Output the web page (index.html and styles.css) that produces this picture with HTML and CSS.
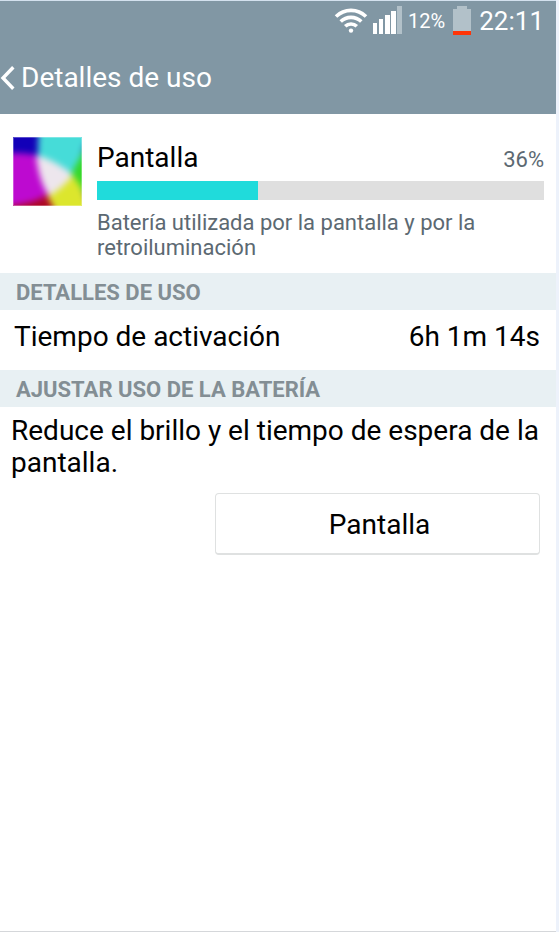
FILE: index.html
```html
<!DOCTYPE html>
<html lang="es">
<head>
<meta charset="utf-8">
<meta name="viewport" content="width=device-width, initial-scale=1">
<title>Detalles de uso</title>
<link rel="stylesheet" href="styles.css">
</head>
<body>
<div class="screen">
  <header class="top">
    <div class="status">
      <svg class="wifi" width="34" height="28" viewBox="0 0 34 28" fill="none" stroke="#fff" stroke-width="3.6" aria-hidden="true">
        <path d="M2 10.500a21.500 21.500 0 0 1 30 0"/>
        <path d="M6.700 15.500a14.800 14.800 0 0 1 20.600 0"/>
        <path d="M11.200 20.300a8.400 8.400 0 0 1 11.600 0"/>
        <circle cx="17" cy="24.600" r="2.200" fill="#fff" stroke="none"/>
      </svg>
      <svg class="signal" width="29" height="30" viewBox="0 0 29 30" fill="#fff" aria-hidden="true">
        <path d="M0 18h4v11H0zM6 14h4v15H6zM12 10h5v19h-5zM18 6h5v23h-5z"/>
        <path d="M24 1h5v28h-5z" fill="#b2c1c9"/>
      </svg>
      <span class="level">12%</span>
      <svg class="battery" width="18" height="30" viewBox="0 0 18 30" aria-hidden="true">
        <path d="M4 1h10v3h4v22H0V4h4z" fill="#b2c1c9"/>
        <path d="M0 26h18v4H0z" fill="#ff3508"/>
      </svg>
      <span class="clock">22:11</span>
    </div>
    <a class="back" href="#">
      <svg width="15" height="24" viewBox="0 0 15 24" fill="none" stroke="#fff" stroke-width="3.400" aria-hidden="true"><path d="M13.300 1.300L3 12l10.300 10.700"/></svg>
      <h1>Detalles de uso</h1>
    </a>
  </header>
  <main>
    <section class="summary">
      <svg class="icon" width="69" height="69" viewBox="0 0 69 69" aria-hidden="true">
        <defs>
          <filter id="soft" filterUnits="userSpaceOnUse" x="-20" y="-20" width="110" height="110" color-interpolation-filters="sRGB"><feGaussianBlur stdDeviation="3"/></filter>
          <clipPath id="tile"><path d="M0 0h69v69H0z"/></clipPath>
        </defs>
        <g clip-path="url(#tile)">
          <path d="M0 0h69v69H0z" fill="#1200b8"/>
          <g filter="url(#soft)">
            <path d="M-20-20h110v110H-20z" fill="#1200b8"/>
            <path d="M-20 17C0 15 18 16 30 20L40 60C28 67 12 69-20 70z" fill="#bd0ad0"/>
            <path d="M-20 71C12 68 26 64 36 56L46 90H-20z" fill="#ad0824"/>
            <path d="M27-20C25 0 25 12 25 20Q46 27 60 40Q66 27 71 10L90-20z" fill="#46dcd8"/>
            <path d="M90-15Q70 14 57 39L90 75z" fill="#35d82a"/>
            <path d="M34 58Q48 52 57 36Q69 48 73 61L90 90H50z" fill="#dce62d"/>
            <path d="M23 18Q44 24 60 38Q50 51 36 59Q26 45 23 18z" fill="#ede6ed"/>
          </g>
          <path d="M.5.500h68v68H.5z" fill="none" stroke="#fff" stroke-opacity=".3"/>
        </g>
      </svg>
      <div class="usage">
        <div class="usage-head">
          <h2>Pantalla</h2>
          <span class="percent">36%</span>
        </div>
        <div class="bar" role="progressbar" aria-label="Pantalla" aria-valuenow="36" aria-valuemin="0" aria-valuemax="100"><div class="fill" style="width:36%"></div></div>
        <p>Batería utilizada por la pantalla y por la retroiluminación</p>
      </div>
    </section>
    <section>
      <h3>DETALLES DE USO</h3>
      <div class="row"><span>Tiempo de activación</span><span>6h 1m 14s</span></div>
    </section>
    <section>
      <h3>AJUSTAR USO DE LA BATERÍA</h3>
      <p class="advice">Reduce el brillo y el tiempo de espera de la pantalla.</p>
      <div class="actions"><button type="button">Pantalla</button></div>
    </section>
  </main>
</div>
</body>
</html>
```
FILE: styles.css
```css
* {
  box-sizing: border-box;
}

body {
  margin: 0;
  background: #edf2fb;
  color: #000;
  font-family: Roboto, "Liberation Sans", sans-serif;
  font-size: 28px;
}

h1, h2, h3, p {
  margin: 0;
  font-weight: 400;
}

.screen {
  min-height: 100vh;
  margin-right: 3px;
  border-top: 1px solid #d3e1ee;
  border-bottom: 1px solid #d5d7da;
  background: #fff;
}

.top {
  background: #8197a4;
  color: #fff;
}

.status {
  display: flex;
  align-items: center;
  justify-content: flex-end;
  height: 40px;
  padding-right: 12px;
}

.wifi,
.signal,
.battery {
  margin-bottom: 2px;
}

.signal {
  margin-left: 5px;
}

.level {
  margin-left: 6px;
  font-size: 20px;
}

.battery {
  margin-left: 8px;
  margin-right: 8px;
}

.clock {
  font-size: 26px;
}

.back {
  display: flex;
  align-items: center;
  gap: 6px;
  height: 73px;
  color: inherit;
  text-decoration: none;
}

.back h1 {
  padding-top: 1px;
  font-size: 28px;
  line-height: 32px;
}

.summary {
  display: flex;
  gap: 15px;
  padding: 23px 12px 13px 13px;
}

.icon {
  flex: none;
}

.usage {
  flex: 1;
}

.usage-head {
  display: flex;
  align-items: baseline;
  justify-content: space-between;
  height: 44px;
  padding-top: 5px;
}

.usage h2 {
  font-size: 28px;
  line-height: 32px;
}

.percent {
  color: #5c6972;
  font-size: 22px;
}

.bar {
  height: 19px;
  background: #dfdfdf;
}

.fill {
  height: 100%;
  background: #20dbdb;
}

.usage p {
  margin-top: 10px;
  color: #5c6972;
  font-size: 22px;
  line-height: 25px;
}

h3 {
  padding: 2px 16px 0;
  background: #e8f0f3;
  color: #838e94;
  font-size: 22px;
  font-weight: 700;
  line-height: 35px;
}

.row {
  display: flex;
  justify-content: space-between;
  padding: 11px 16px 17px 14px;
  line-height: 32px;
}

.advice {
  padding: 8px 11px;
  line-height: 32px;
}

.actions {
  display: flex;
  justify-content: flex-end;
  padding: 6px 16px;
}

button {
  width: 62%;
  height: 62px;
  padding: 4px 0 2px 4px;
  border: 1px solid #dfe1e1;
  border-bottom-width: 2px;
  border-radius: 4px;
  background: #fff;
  color: #000;
  font: inherit;
}
```
